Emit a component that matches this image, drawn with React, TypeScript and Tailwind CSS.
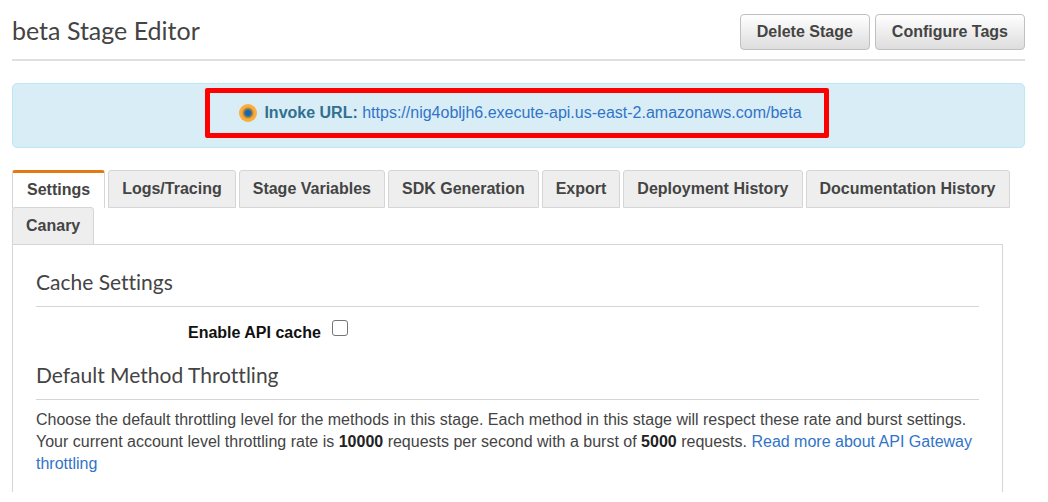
import { useState } from "react";

const tabs = [
  "Settings",
  "Logs/Tracing",
  "Stage Variables",
  "SDK Generation",
  "Export",
  "Deployment History",
  "Documentation History",
  "Canary",
];

function ActionButton({ label }: { label: string }) {
  return (
    <button
      type="button"
      className="h-9 rounded-[4px] border border-[#c0c0c0] bg-linear-to-b from-white to-[#dddddd] px-4 font-bold text-[#444444]"
    >
      {label}
    </button>
  );
}

function SectionTitle({ children }: { children: string }) {
  return (
    <h2 className="border-b border-[#d5d5d5] pb-[11px] font-['Lato',sans-serif] text-[21px] leading-[26px] text-[#444444] [font-variant-ligatures:none]">
      {children}
    </h2>
  );
}

function SunIcon() {
  return (
    <svg viewBox="0 0 20 20" className="h-[18px] w-[18px] shrink-0" aria-hidden="true">
      <defs>
        <radialGradient id="sun">
          <stop offset="0" stopColor="#1166bb" />
          <stop offset="0.27" stopColor="#1166bb" />
          <stop offset="0.45" stopColor="#8a7c48" />
          <stop offset="0.6" stopColor="#e09a30" />
          <stop offset="0.7" stopColor="#f9ac38" />
          <stop offset="1" stopColor="#f9ae3d" />
        </radialGradient>
      </defs>
      <circle cx="10" cy="10" r="10" fill="url(#sun)" />
    </svg>
  );
}

export default function App() {
  const [active, setActive] = useState("Settings");
  return (
    <main className="bg-white pt-[14px] pr-[23px] pb-[11px] pl-3 font-['Liberation_Sans',Arial,sans-serif] text-[16px] leading-[22px] text-[#444444]">
      <header className="flex items-start justify-between border-b-2 border-[#dfdfdf] pb-[9px]">
        <h1 className="font-['Lato',sans-serif] text-[25px] leading-8">beta Stage Editor</h1>
        <div className="flex gap-[5px]">
          <ActionButton label="Delete Stage" />
          <ActionButton label="Configure Tags" />
        </div>
      </header>

      <section className="mt-[22px] flex justify-center rounded-[5px] border border-[#bce8f1] bg-[#d9edf7] pt-1 pr-[3px] pb-[9px]">
        <div className="flex items-center rounded-[2px] border-[5px] border-[#ff0000] py-[9px] pr-[22px] pl-[29px]">
          <SunIcon />
          <p className="pl-[7px]">
            <strong className="text-[#31708f]">Invoke URL:</strong>{" "}
            <a
              href="https://nig4obljh6.execute-api.us-east-2.amazonaws.com/beta"
              className="text-[#3174c7]"
            >
              https://nig4obljh6.execute-api.us-east-2.amazonaws.com/beta
            </a>
          </p>
        </div>
      </section>

      <div role="tablist" className="mt-[22px] flex flex-wrap gap-x-[3px]">
        {tabs.map((tab) => (
          <button
            key={tab}
            type="button"
            role="tab"
            aria-selected={tab === active}
            onClick={() => setActive(tab)}
            className={
              tab === active
                ? "-mb-px h-[38px] rounded-t-[3px] border-x border-t-[3px] border-x-[#d5d5d5] border-t-[#e47911] bg-white px-[14px] pb-[2px] font-bold"
                : "-mb-px h-[38px] rounded-t-[3px] border border-[#d5d5d5] bg-[#eeeeee] px-[13px] font-bold"
            }
          >
            {tab}
          </button>
        ))}
      </div>

      <section
        role="tabpanel"
        className="mr-[22px] border-x border-t border-[#d5d5d5] px-[23px] pt-6 pb-[17px]"
      >
        <SectionTitle>Cache Settings</SectionTitle>
        <div className="flex gap-[11px] pt-[13px] pb-[18px] pl-[152px]">
          <label htmlFor="api-cache" className="pt-[2px] font-bold text-[#111111]">
            Enable API cache
          </label>
          <input
            id="api-cache"
            type="checkbox"
            className="h-4 w-4 appearance-none rounded-[3px] border border-[#767676] bg-white checked:bg-[#3174c7]"
          />
        </div>
        <SectionTitle>Default Method Throttling</SectionTitle>
        <p className="pt-[9px]">
          Choose the default throttling level for the methods in this stage. Each method in this
          stage will respect these rate and burst settings. Your current account level throttling
          rate is <strong className="text-[#222222]">10000</strong> requests per second with a burst
          of <strong className="text-[#222222]">5000</strong> requests.{" "}
          <a
            href="https://docs.aws.amazon.com/apigateway/"
            className="text-[#3174c7]"
          >
            Read more about API Gateway throttling
          </a>
        </p>
      </section>
    </main>
  );
}
